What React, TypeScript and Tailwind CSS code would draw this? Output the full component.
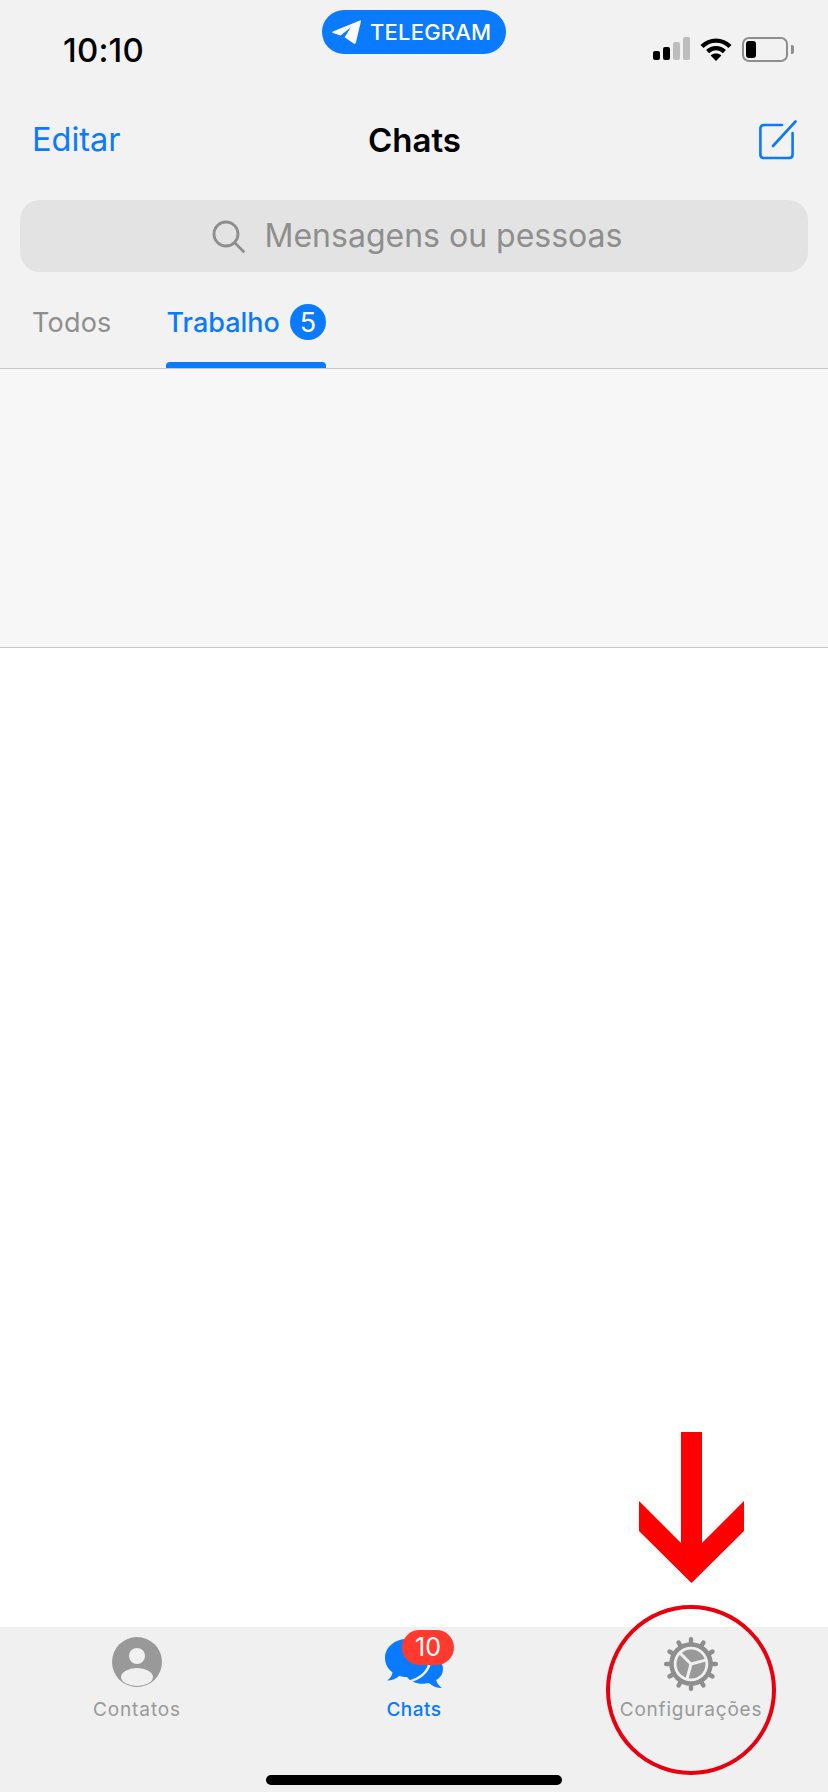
const font = 'font-["Inter","Liberation_Sans",sans-serif]'

function Signal() {
  return (
    <div className="flex items-end gap-[3px]">
      <div className="h-[9px] w-[7px] rounded-[2px] bg-black" />
      <div className="h-[13px] w-[7px] rounded-[2px] bg-black" />
      <div className="h-[18px] w-[7px] rounded-[2px] bg-[#bdbdbd]" />
      <div className="h-[23px] w-[7px] rounded-[2px] bg-[#bdbdbd]" />
    </div>
  )
}

function Wifi() {
  return (
    <svg width="32" height="24" viewBox="0 0 32 24" fill="none" stroke="#000" strokeWidth="4.4">
      <path d="M2 9.5C10 1.6 22 1.6 30 9.5" />
      <path d="M7.6 14.6C12.4 10 19.6 10 24.4 14.6" />
      <path d="M16 24L10.6 18.4C13.6 15.9 18.4 15.9 21.4 18.4Z" fill="#000" stroke="none" />
    </svg>
  )
}

function Battery() {
  return (
    <div className="flex items-center gap-[3px]">
      <div className="flex h-[25px] w-[46px] items-center rounded-[7px] border-[2px] border-[#8e8e8e] pl-[2px]">
        <div className="h-[17px] w-[10px] rounded-[3px] bg-black" />
      </div>
      <div className="h-[9px] w-[3px] rounded-r-[2px] bg-[#8e8e8e]" />
    </div>
  )
}

function PlaneIcon() {
  return (
    <svg width="29" height="24" viewBox="0 0 29 24" fill="#fff">
      <path d="M28 0.4L0.8 11.4C0 11.8 0 12.8 0.9 13.1L8.6 15.6L19 7.2L12.6 17.2L21.6 23.4C22.6 24 23.6 23.6 23.9 22.4L28.9 1.4C29 0.6 28.6 0.2 28 0.4Z" />
    </svg>
  )
}

function ComposeIcon() {
  return (
    <svg width="38" height="40" viewBox="0 0 38 40" fill="none" stroke="#0a7aff" strokeWidth="2.6" strokeLinecap="round">
      <path d="M23 5H5C2.8 5 1.4 6.4 1.4 8.6V34.4C1.4 36.6 2.8 38 5 38H30C32.2 38 33.6 36.6 33.6 34.4V13" />
      <path d="M14 26L36.5 1.5" />
    </svg>
  )
}

function SearchIcon() {
  return (
    <svg width="33" height="33" viewBox="0 0 33 33" fill="none" stroke="#8e8e8e" strokeWidth="2.8" strokeLinecap="round">
      <circle cx="14" cy="14" r="12" />
      <path d="M23 23L31.5 31.5" />
    </svg>
  )
}

function AvatarIcon() {
  return (
    <svg width="50" height="50" viewBox="0 0 50 50">
      <circle cx="25" cy="25" r="25" fill="#999" />
      <circle cx="25" cy="19" r="8" fill="#f0f0f0" />
      <ellipse cx="25" cy="40" rx="16" ry="9" fill="#f0f0f0" />
    </svg>
  )
}

function ChatsIcon() {
  return (
    <svg width="58" height="52" viewBox="0 0 58 52">
      <path d="M40 17C49 17 58 22 58 32C58 37 55 41 51 43C52 46 54 49 57 51C52 51 47 49 44 46C36 48 26 46 22 40Z" fill="#0a7aff" />
      <path d="M22 2C33 2 43 10 43 21C43 32 33 40 22 40C19 40 16 39.5 14 39C11 42 6 43.5 2 43.5C5 41.5 7 39 7.5 35.5C3 32 0 27 0 21C0 10 10 2 22 2Z" fill="#0a7aff" />
      <path d="M44.5 27C42 36 34 42 23 45" fill="none" stroke="#f0f0f0" strokeWidth="2.6" />
    </svg>
  )
}

function GearIcon() {
  const teeth = [0, 30, 60, 90, 120, 150, 180, 210, 240, 270, 300, 330]
  return (
    <svg width="54" height="54" viewBox="-27 -27 54 54">
      {teeth.map((deg) => (
        <rect key={deg} x="-2.2" y="-27" width="4.4" height="9" rx="2" fill="#8e8e8e" transform={`rotate(${deg})`} />
      ))}
      <circle r="19.5" fill="none" stroke="#8e8e8e" strokeWidth="4.5" />
      <circle r="14.5" fill="#999" />
      <g stroke="#f0f0f0" strokeWidth="3" transform="rotate(15)">
        <path d="M0 0V16" />
        <path d="M0 0L-14 -8" />
        <path d="M0 0L14 -8" />
      </g>
    </svg>
  )
}

function ArrowMark() {
  return (
    <svg width="105" height="151" viewBox="0 0 105 151" className="absolute left-[639px] top-[1432px]">
      <path d="M42 0H63V111L105 69V99L52.5 151L0 99V69L42 111Z" fill="#ff0000" />
    </svg>
  )
}

function CircleMark() {
  return (
    <svg width="170" height="170" viewBox="0 0 170 170" className="absolute left-[606px] top-[1605px]">
      <circle cx="85" cy="85" r="83" fill="none" stroke="#e8000f" strokeWidth="4" />
    </svg>
  )
}

export default function App() {
  return (
    <div className={`relative flex h-[1792px] w-[828px] flex-col overflow-hidden bg-white ${font}`}>
      <header className="flex h-[368px] flex-col bg-[#f2f2f2]">
        <div className="grid h-[70px] grid-cols-[1fr_184px_1fr]">
          <div className="pl-[63px] pt-[30px] text-[33px] leading-[40px] font-medium tracking-[0.2px] text-black">10:10</div>
          <div className="mt-[10px] flex h-[44px] items-center gap-[9px] rounded-full bg-[#0a7aff] pl-[10px]">
            <PlaneIcon />
            <span className="text-[22px] leading-none font-medium tracking-[0.2px] text-white">TELEGRAM</span>
          </div>
          <div className="flex items-start justify-end gap-[10px] pr-[34px] pt-[37px]">
            <Signal />
            <Wifi />
            <Battery />
          </div>
        </div>

        <div className="mt-[40px] flex h-[60px] items-center justify-between pl-[32px] pr-[31px]">
          <span className="w-[120px] text-[32.5px] leading-none text-[#0a7aff]">Editar</span>
          <span className="text-[33px] leading-none font-semibold text-black">Chats</span>
          <div className="flex w-[120px] justify-end">
            <ComposeIcon />
          </div>
        </div>

        <div className="mx-[20px] mt-[30px] flex h-[72px] items-center justify-center gap-[20px] rounded-[20px] bg-[#e3e3e3] pl-[6px]">
          <SearchIcon />
          <span className="text-[32px] leading-none text-[#8e8e8e]">Mensagens ou pessoas</span>
        </div>

        <div className="mt-[26px] flex h-[70px] items-start pl-[32px]">
          <span className="mt-[11px] text-[27px] leading-none tracking-[0.2px] text-[#8e8e8e]">Todos</span>
          <div className="ml-[55px] flex h-[70px] flex-col justify-between">
            <div className="mt-[6px] flex items-center gap-[10px]">
              <span className="text-[27px] leading-none font-medium text-[#0a7aff]">Trabalho</span>
              <span className="flex h-[36px] w-[36px] items-center justify-center rounded-full bg-[#0a7aff] text-[27px] leading-none text-white">5</span>
            </div>
            <div className="h-[6px] rounded-t-[4px] bg-[#0a7aff]" />
          </div>
        </div>
      </header>

      <div className="h-[280px] border-y border-[#c8c8c8] bg-[#f7f7f7]" />

      <main className="flex-1 bg-white" />

      <nav className="flex h-[165px] flex-col bg-[#f0f0f0]">
        <div className="grid grid-cols-[274px_280px_274px] pt-[10px]">
          <div className="flex flex-col items-center">
            <AvatarIcon />
            <span className="mt-[13px] text-[19px] leading-[20px] tracking-[0.9px] text-[#999]">Contatos</span>
          </div>
          <div className="relative flex flex-col items-center">
            <ChatsIcon />
            <span className="absolute left-[128px] top-[-7px] flex h-[35px] w-[52px] items-center justify-center rounded-full bg-[#ff3b30] text-[25px] leading-none text-white">10</span>
            <span className="mt-[11px] text-[19px] leading-[20px] font-medium tracking-[0.5px] text-[#0a7aff]">Chats</span>
          </div>
          <div className="flex flex-col items-center">
            <GearIcon />
            <span className="mt-[9px] text-[19px] leading-[20px] tracking-[0.8px] text-[#999]">Configurações</span>
          </div>
        </div>
        <div className="mx-auto mt-[55px] h-[10px] w-[296px] rounded-full bg-black" />
      </nav>

      <ArrowMark />
      <CircleMark />
    </div>
  )
}
